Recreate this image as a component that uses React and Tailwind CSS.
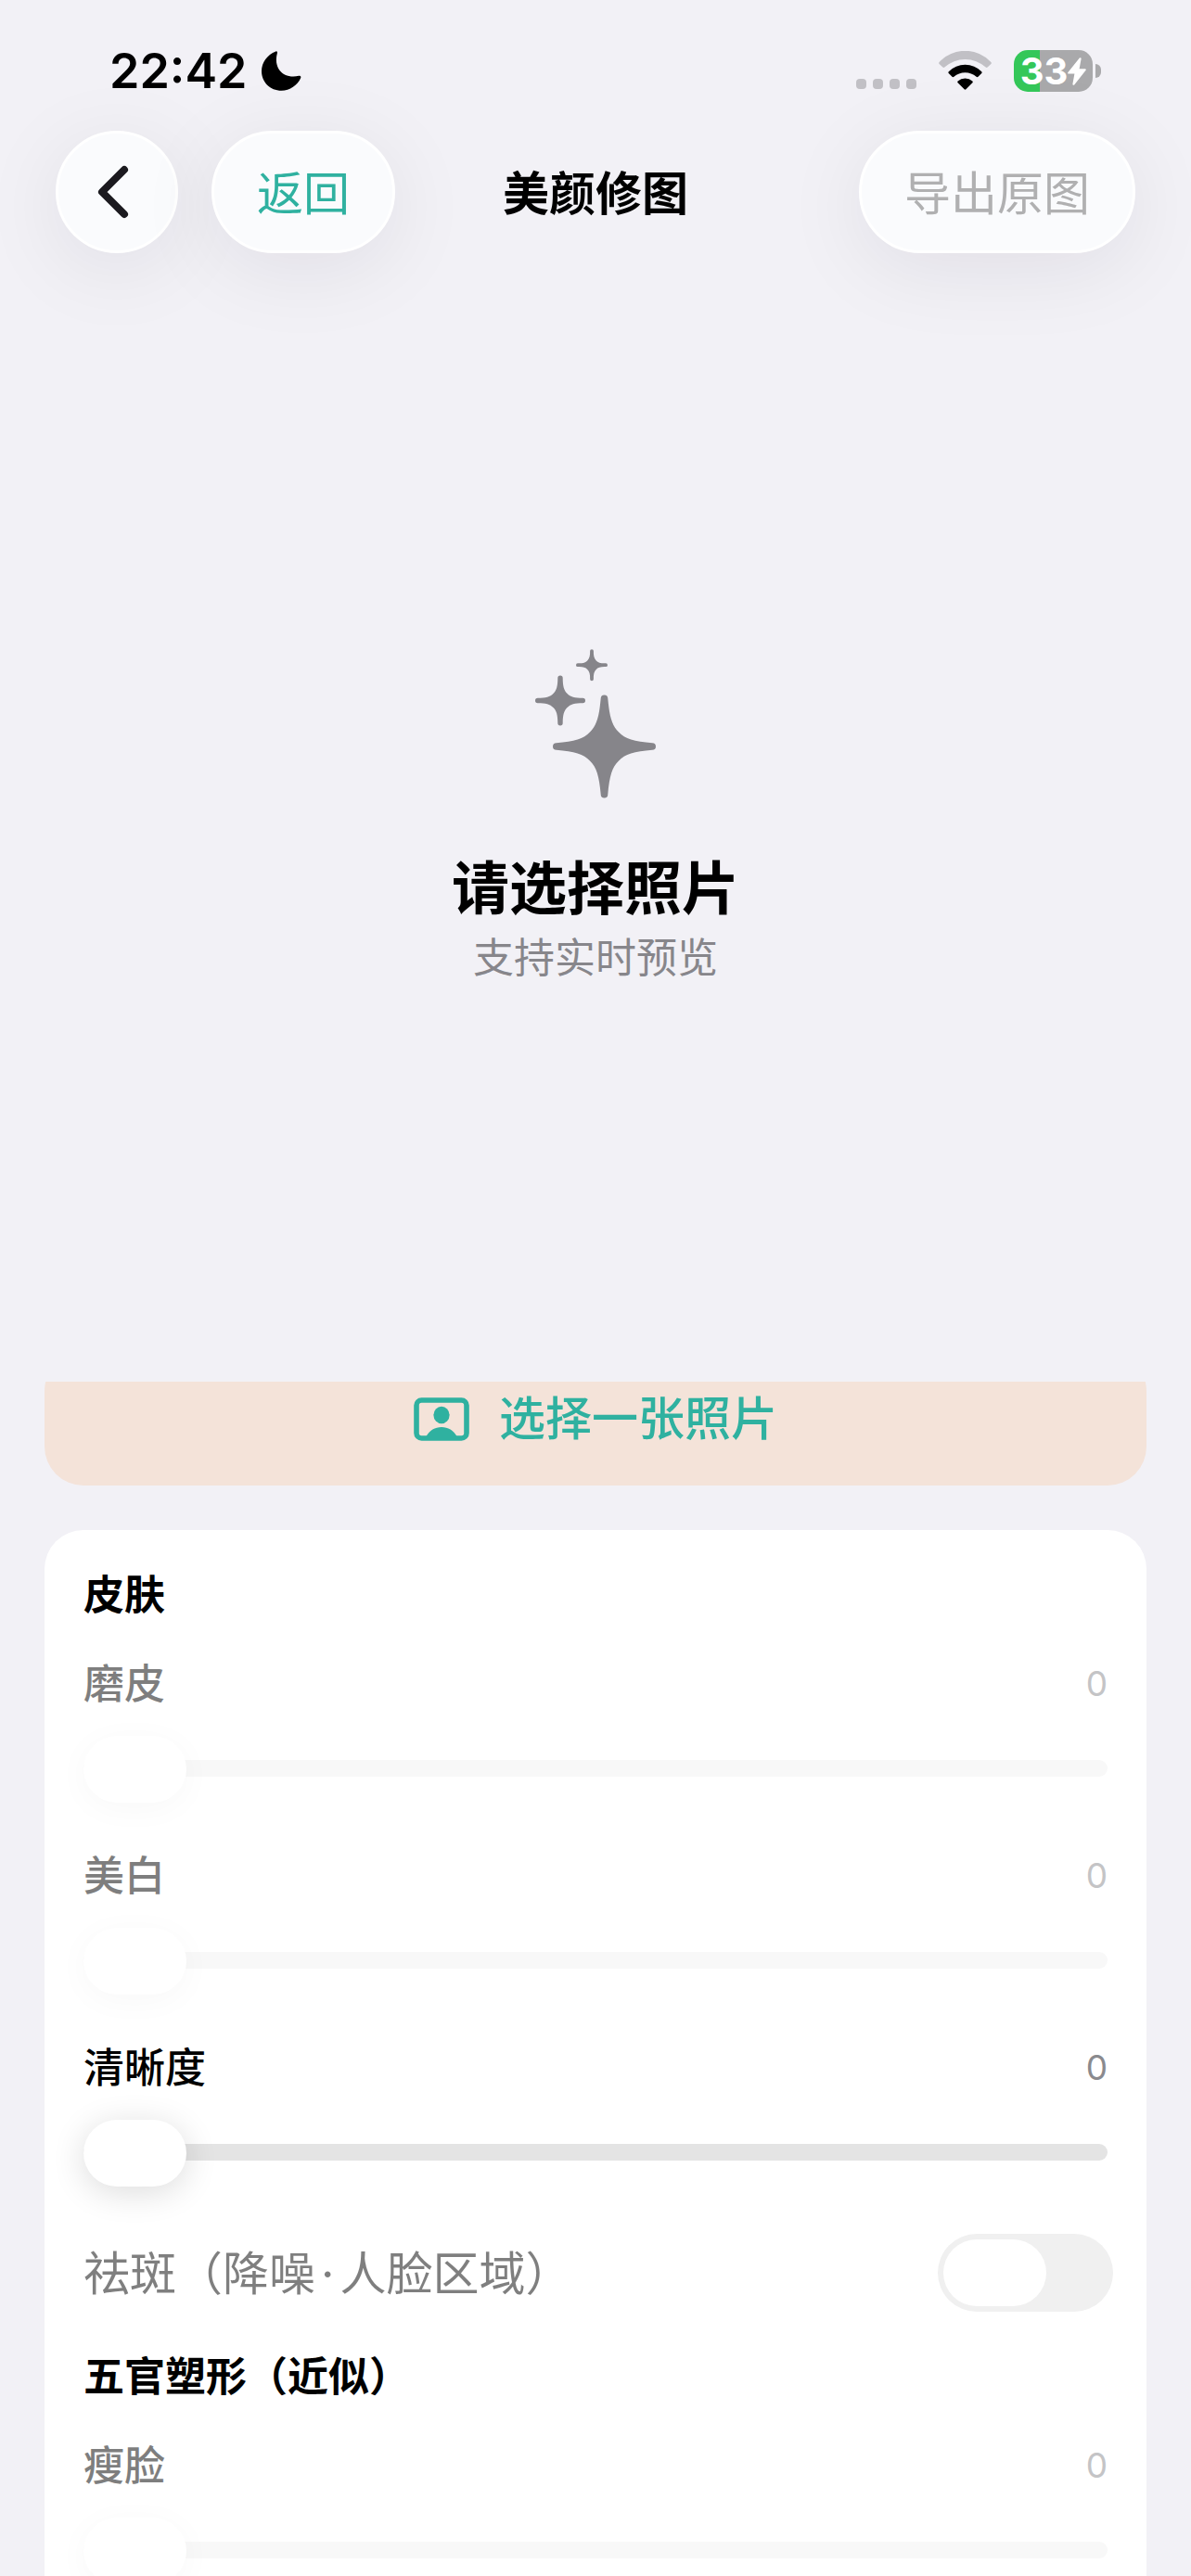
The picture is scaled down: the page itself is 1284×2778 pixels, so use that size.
import { useState } from 'react';

const starPath = (cx, cy, r, t) => {
    const e = r - t;
    const w = r * 0.28;
    const a = r * 0.1;
    const b = r * 0.58;
    const c = r * 0.15;
    const d = r * 0.4;
    const p = (x, y) => `${cx + x} ${cy + y}`;
    const arc = (x, y) => `A${t} ${t} 0 0 1 ${p(x, y)}`;
    return [
        `M${p(t, -e)}`,
        `C${p(a, -b)} ${p(c, -d)} ${p(w, -w)}`,
        `C${p(d, -c)} ${p(b, -a)} ${p(e, -t)}`,
        arc(e, t),
        `C${p(b, a)} ${p(d, c)} ${p(w, w)}`,
        `C${p(c, d)} ${p(a, b)} ${p(t, e)}`,
        arc(-t, e),
        `C${p(-a, b)} ${p(-c, d)} ${p(-w, w)}`,
        `C${p(-d, c)} ${p(-b, a)} ${p(-e, t)}`,
        arc(-e, -t),
        `C${p(-b, -a)} ${p(-d, -c)} ${p(-w, -w)}`,
        `C${p(-c, -d)} ${p(-a, -b)} ${p(-t, -e)}`,
        arc(t, -e),
        'Z',
    ].join(' ');
};

const SparklesIcon = () => (
    <svg width="130" height="161" viewBox="0 0 130 161" fill="#86858a" aria-hidden="true">
        <path d={starPath(74.5, 105, 55.5, 3.8)} />
        <path d={starPath(27, 55.5, 27, 2.7)} />
        <path d={starPath(61, 17.2, 17, 1.9)} />
    </svg>
);

const MoonIcon = () => (
    <svg width="43" height="43" viewBox="0 0 43 43" aria-hidden="true">
        <path d="M15.3 .4C6 4 0 12.5 0 21.7C0 33.5 9.3 42.7 21.5 42.7C30.5 42.7 38.8 37 42.2 29C42.9 27.2 41.7 26.2 40.2 26.8C24 30.5 12.3 19 16.9 2.2C17.2 .8 16.5 0 15.3 .4Z" />
    </svg>
);

const WifiIcon = () => (
    <svg width="57" height="43" viewBox="0 0 57 43" aria-hidden="true">
        <path fill="#c1c0c5" d="M.6 12A38 38 0 0 1 56.4 12Q57.3 13 56.4 14L52.6 17.6Q51.6 18.4 50.7 17.5A33 33 0 0 0 6.3 17.5Q5.4 18.4 4.4 17.6L.6 14Q-.3 13 .6 12Z" />
        <path d="M10.7 22.3A25 25 0 0 1 46.3 22.3Q47.1 23.2 46.3 24.1L42.5 27.8Q41.6 28.6 40.6 27.8A18.5 18.5 0 0 0 16.4 27.8Q15.4 28.6 14.5 27.8L10.7 24.1Q9.9 23.2 10.7 22.3Z" />
        <path d="M20.6 32.4A12 12 0 0 1 36.4 32.4Q37.3 33.4 36.4 34.3L29.4 41.3Q28.5 42.1 27.6 41.3L20.6 34.3Q19.7 33.4 20.6 32.4Z" />
    </svg>
);

const BoltIcon = () => (
    <svg width="20" height="30" viewBox="0 0 20 30" aria-hidden="true">
        <path d="M13.6 1.2L1.2 16.6H8.6L6.4 28.8L18.8 13.2H11.4Z" fill="#fff" stroke="#fff" strokeWidth="2" strokeLinejoin="round" />
    </svg>
);

const ChevronIcon = () => (
    <svg width="34" height="58" viewBox="0 0 34 58" fill="none" aria-hidden="true">
        <path d="M29 5L5 29L29 53" stroke="#1b1a1f" strokeWidth="8" strokeLinecap="round" strokeLinejoin="round" />
    </svg>
);

const PortraitIcon = () => (
    <svg width="60" height="47" viewBox="0 0 60 47" fill="#2fb1a0" aria-hidden="true">
        <rect x="3" y="3" width="54" height="41" rx="5.5" fill="none" stroke="#2fb1a0" strokeWidth="5.6" />
        <ellipse cx="30" cy="19" rx="8.6" ry="9.2" />
        <path d="M13.500 42C17 35.500 23 32 30 32S43 35.500 46.500 42Z" />
    </svg>
);

const glass = 'flex items-center justify-center h-[132px] rounded-full border-3 border-white bg-[#fafbfd] text-[50px] leading-[60px] shadow-[0_16px_90px_rgba(20,10,40,0.08)]';

const StatusBar = () => (
    <div className="flex items-center justify-between h-[141px] pt-3 pl-[118px] pr-[97px]">
        <div className="flex items-center gap-4">
            <span className="text-[52px] leading-[60px] font-semibold">22:42</span>
            <MoonIcon />
        </div>
        <div className="flex items-center">
            <div className="flex gap-[7px] mt-7 mr-6">
                {[0, 1, 2, 3].map((dot) => (
                    <span key={dot} className="size-[11px] rounded-[4px] bg-[#c1c0c5]" />
                ))}
            </div>
            <WifiIcon />
            <div className="flex items-center justify-center w-[85px] h-[45px] ml-6 rounded-[15px] bg-linear-to-r from-[#34c759] from-33% to-[#a9a9ab] to-33%">
                <span className="text-[40px] leading-[45px] font-bold text-white">33</span>
                <BoltIcon />
            </div>
            <span className="w-[6px] h-[15px] ml-[3px] rounded-r-full bg-[#a9a9ab]" />
        </div>
    </div>
);

const SliderRow = ({ id, label, disabled }) => {
    const [value, setValue] = useState(0);

    return (
        <div>
            <div className={`flex items-center justify-between ${disabled ? 'opacity-50' : ''}`}>
                <label htmlFor={id} className="text-[44px] leading-[60px] font-medium">{label}</label>
                <output htmlFor={id} className="text-[37px] leading-[60px] text-[#8a8a8e]">{value}</output>
            </div>
            <input
                id={id}
                type="range"
                min="0"
                max="100"
                value={value}
                disabled={disabled}
                onChange={(e) => setValue(Number(e.target.value))}
                className="block w-full h-[70px] mt-[26px] mb-[15px] appearance-none bg-transparent [&::-webkit-slider-runnable-track]:h-[18px] [&::-webkit-slider-runnable-track]:rounded-full [&::-webkit-slider-runnable-track]:bg-[#e4e4e4] disabled:[&::-webkit-slider-runnable-track]:bg-[#f8f8f8] [&::-webkit-slider-thumb]:appearance-none [&::-webkit-slider-thumb]:w-[111px] [&::-webkit-slider-thumb]:h-[72px] [&::-webkit-slider-thumb]:-mt-[26px] [&::-webkit-slider-thumb]:rounded-full [&::-webkit-slider-thumb]:bg-white [&::-webkit-slider-thumb]:shadow-[0_6px_36px_rgba(0,0,0,0.14)] disabled:[&::-webkit-slider-thumb]:shadow-[0_6px_36px_rgba(0,0,0,0.03)]"
            />
        </div>
    );
};

const SectionTitle = ({ children }) => (
    <h3 className="text-[44px] leading-[60px] font-semibold">{children}</h3>
);

export default function App() {
    const [denoise, setDenoise] = useState(false);

    return (
        <div className="flex flex-col h-screen overflow-hidden bg-[#f2f1f6] text-black font-[Inter,'Noto_Sans_CJK_SC',sans-serif]">
            <StatusBar />
            <header className="grid grid-cols-[1fr_auto_1fr] items-center px-[60px]">
                <div className="flex gap-9">
                    <button type="button" aria-label="返回上一页" className={`${glass} w-[132px] pr-[9px]`}>
                        <ChevronIcon />
                    </button>
                    <button type="button" className={`${glass} px-[46px] pt-1 text-[#2fb1a0]`}>返回</button>
                </div>
                <h1 className="pt-1 text-[50px] leading-[60px] font-semibold">美颜修图</h1>
                <button type="button" disabled className={`${glass} justify-self-end px-[46px] pt-1 text-[#b0b0b1]`}>导出原图</button>
            </header>

            <section className="flex flex-col items-center pt-[427px] pb-[425px]">
                <SparklesIcon />
                <h2 className="mt-14 text-[62px] leading-[84px] font-bold">请选择照片</h2>
                <p className="text-[44px] leading-[64px] text-[#87868b]">支持实时预览</p>
            </section>

            <main className="flex-1 min-h-0 overflow-hidden px-12">
                <button type="button" className="flex items-center justify-center gap-8 w-full h-36 -mt-8 rounded-[42px] bg-[#f4e3d9] text-[50px] leading-[60px] font-medium text-[#2fb1a0]">
                    <PortraitIcon />
                    选择一张照片
                </button>

                <div className="flex flex-col gap-9 mt-12 px-[42px] pt-10 pb-12 rounded-[42px] bg-white">
                    <SectionTitle>皮肤</SectionTitle>
                    <SliderRow id="smooth" label="磨皮" disabled />
                    <SliderRow id="whiten" label="美白" disabled />
                    <SliderRow id="clarity" label="清晰度" />
                    <div className="flex items-center justify-between h-[90px]">
                        <label htmlFor="denoise" className="text-[50px] leading-[60px] text-black/50">
                            祛斑（降噪<span className="mx-[6px]">·</span>人脸区域）
                        </label>
                        <input
                            id="denoise"
                            type="checkbox"
                            role="switch"
                            disabled
                            checked={denoise}
                            onChange={(e) => setDenoise(e.target.checked)}
                            className="w-[189px] h-[84px] p-[6px] mb-[2px] -mr-[6px] appearance-none rounded-full bg-[#f0f0f0] before:block before:w-[111px] before:h-[72px] before:rounded-full before:bg-white checked:before:ml-auto"
                        />
                    </div>
                    <SectionTitle>五官塑形（近似）</SectionTitle>
                    <SliderRow id="slim" label="瘦脸" disabled />
                </div>
            </main>
        </div>
    );
}
